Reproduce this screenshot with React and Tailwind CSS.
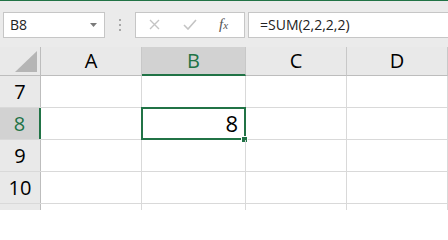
import React from 'react';

const cols = [
  { key: 'A', w: 'w-[101px]' },
  { key: 'B', w: 'w-[104px]' },
  { key: 'C', w: 'w-[101px]' },
  { key: 'D', w: 'flex-1' },
];

// last row only peeks in at the bottom edge
const rows = [7, 8, 9, 10, ''];

const ColHeader = ({ label, w, active }) => (
  <div
    className={`${w} h-full flex items-center justify-center border-r border-[#c8c8c8] text-[20px] ${
      active ? 'bg-[#d2d2d2] text-[#217346] border-b-2 border-b-[#217346]' : 'text-black border-b border-b-[#bdbdbd]'
    }`}
  >
    {label}
  </div>
);

const RowHeader = ({ n, active }) => (
  <div
    className={`w-[41px] h-full flex items-center justify-center text-[20px] ${
      active ? 'bg-[#d2d2d2] text-[#217346] border-r-2 border-r-[#217346]' : 'bg-[#e9e9e9] text-black border-r border-r-[#bdbdbd]'
    }`}
  >
    {n}
  </div>
);

const Cell = ({ w, selected, value }) => (
  <div className={`${w} relative h-full border-r border-[#d9d9d9]`}>
    {selected && (
      <>
        <div className="absolute -left-px -top-px right-[-1px] bottom-[-1px] border-2 border-[#217346] flex items-center justify-end pr-[6px] text-[22px] text-black">
          {value}
        </div>
        <div className="absolute right-[-3px] bottom-[-4px] w-[7px] h-[7px] bg-[#217346] border border-white" />
      </>
    )}
  </div>
);

export default function App() {
  return (
    <div
      className="w-[448px] h-[210px] overflow-hidden bg-white"
      style={{ fontFamily: '"Open Sans", "Noto Sans", sans-serif' }}
    >
      {/* ribbon edge */}
      <div className="h-px bg-[#217346]" />

      {/* formula bar */}
      <div className="h-[46px] bg-[#ebebeb] flex items-center pl-[3px] pt-[1px]">
        <div className="w-[102px] h-[26px] bg-white border border-[#c6c6c6] flex items-center pl-[6px] pr-[7px] text-[14px] text-[#222]">
          <span className="flex-1">B8</span>
          <svg width="7" height="4" viewBox="0 0 7 4">
            <path d="M0 0h7L3.5 4z" fill="#7a7a7a" />
          </svg>
        </div>
        <div className="w-[30px] flex flex-col items-center gap-[3px]">
          <span className="w-[2px] h-[2px] bg-[#a8a8a8]" />
          <span className="w-[2px] h-[2px] bg-[#a8a8a8]" />
          <span className="w-[2px] h-[2px] bg-[#a8a8a8]" />
        </div>
        <div className="w-[110px] h-[26px] bg-white border border-[#c6c6c6] flex items-center">
          <svg className="ml-[13px]" width="11" height="11" viewBox="0 0 11 11">
            <path d="M1 1l9 9M10 1l-9 9" stroke="#c4c4c4" strokeWidth="1.4" />
          </svg>
          <svg className="ml-[23px]" width="14" height="11" viewBox="0 0 14 11">
            <path d="M1 6l4 4 8-9" stroke="#c4c4c4" strokeWidth="1.6" fill="none" />
          </svg>
          <span
            className="ml-[22px] italic text-[15px] text-[#555] leading-none"
            style={{ fontFamily: '"Liberation Serif", serif' }}
          >
            f<span className="text-[11px]">x</span>
          </span>
        </div>
        <div className="flex-1 h-[26px] ml-[3px] bg-white border border-r-0 border-[#c6c6c6] flex items-center pl-[11px] text-[14px] text-[#222]">
          =SUM(2,2,2,2)
        </div>
      </div>

      {/* column headers */}
      <div className="h-[29px] flex bg-[#e9e9e9]">
        <div className="w-[41px] h-full border-r border-b border-[#bdbdbd] flex items-end justify-end pr-[3px] pb-[3px]">
          <svg width="22" height="21" viewBox="0 0 22 21">
            <path d="M22 0V21H0z" fill="#b5b5b5" />
          </svg>
        </div>
        {cols.map((c) => (
          <ColHeader key={c.key} label={c.key} w={c.w} active={c.key === 'B'} />
        ))}
      </div>

      {/* rows */}
      {rows.map((n, i) => (
        <div key={i} className="h-[32px] flex border-b border-[#d9d9d9]">
          <RowHeader n={n} active={n === 8} />
          {cols.map((c) => (
            <Cell key={c.key} w={c.w} selected={n === 8 && c.key === 'B'} value="8" />
          ))}
        </div>
      ))}
    </div>
  );
}
